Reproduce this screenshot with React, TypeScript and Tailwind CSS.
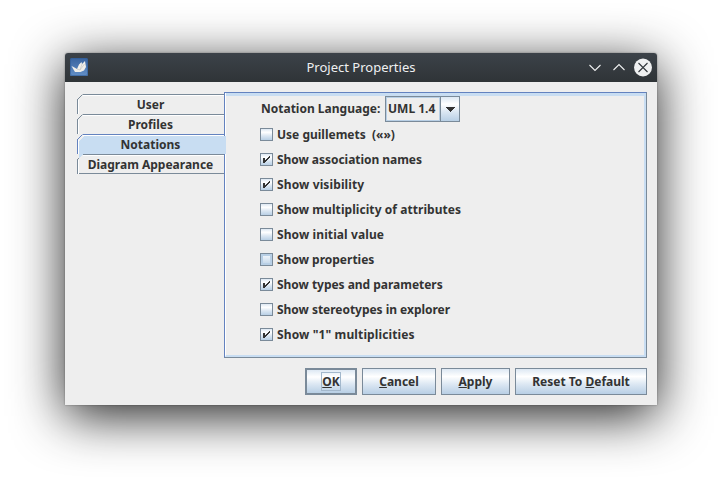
import type { ReactNode } from "react";

const options = [
  { label: "Use guillemets  («»)", checked: false, tracking: "" },
  { label: "Show association names", checked: true, tracking: "tracking-[-0.04px]" },
  { label: "Show visibility", checked: true, tracking: "tracking-[0.12px]" },
  { label: "Show multiplicity of attributes", checked: false, tracking: "tracking-[0.06px]" },
  { label: "Show initial value", checked: false, tracking: "tracking-[0.1px]" },
  { label: "Show properties", checked: false, hover: true, tracking: "" },
  { label: "Show types and parameters", checked: true, tracking: "tracking-[-0.03px]" },
  { label: "Show stereotypes in explorer", checked: false, tracking: "tracking-[-0.03px]" },
  { label: 'Show "1" multiplicities', checked: true, tracking: "tracking-[0.12px]" },
];

const metal = "bg-[linear-gradient(#dde8f3_0%,#ffffff_30%,#dde8f3_60%,#b8cfe5_100%)]";

function Logo() {
  return (
    <svg className="mb-px" width="18" height="18" viewBox="0 0 18 18">
      <defs>
        <linearGradient id="sky" x1="0" y1="0" x2="0" y2="1">
          <stop offset="0" stopColor="#39639f" />
          <stop offset="1" stopColor="#638fc6" />
        </linearGradient>
      </defs>
      <rect width="18" height="18" rx="1.5" fill="url(#sky)" />
      <rect x="0.5" y="0.5" width="17" height="17" rx="1.5" fill="none" stroke="#2f5a94" strokeOpacity="0.6" />
      <path d="M1.5 8 L3.5 9 L7 11 L9 6.5 L11.5 4 L12 6 L15 3 L16 9 L14 12.5 L10.5 14 L5 14 L3.2 11 Z" fill="#f1efea" />
      <path d="M7 11 L10 12 L12 6 M10 12 L14.5 6" fill="none" stroke="#c9c8c4" strokeWidth="0.7" />
    </svg>
  );
}

function Tab({ label, selected = false }: { label: string; selected?: boolean }) {
  const line = selected ? "#6382bf" : "#7a8a99";
  return (
    <div className={`relative h-5 w-[147px] ${selected ? "z-10" : ""}`}>
      <svg className="absolute top-0 left-0 max-w-none overflow-visible" width="149" height="20" shapeRendering="crispEdges">
        {selected && <path d="M2 7 L7 2 H149 V20 H6 L2 24 Z" fill="#c8ddf2" />}
        <path d="M6 1.5 H147" stroke="#ffffff" />
        <path d="M1.5 6 V20" stroke="#ffffff" />
        <path d="M6 0.5 H147" stroke={line} />
        <path d="M0.5 5 V20" stroke={line} />
        <path d="M0.5 5.5 L5.5 0.5" stroke={line} fill="none" shapeRendering="auto" />
      </svg>
      <div className="relative w-[147px] pt-px text-center leading-5">{label}</div>
    </div>
  );
}

function CheckBox({ checked, hover }: { checked: boolean; hover?: boolean }) {
  return (
    <span
      className={`block size-[13px] shrink-0 border border-[#7a8a99] ${hover ? "bg-[#b8cfe5] p-[2px]" : metal}`}
    >
      {hover && <span className="block size-[7px] bg-[linear-gradient(#eef4fa,#c8daeb)]" />}
      {checked && (
        <svg width="11" height="11" viewBox="0 0 11 11" shapeRendering="crispEdges">
          <path d="M2 4h2v5h-2z M4 6h1v2h-1z M5 5h1v2h-1z M6 4h1v2h-1z M7 3h1v2h-1z M8 2h1v2h-1z" fill="#333333" />
        </svg>
      )}
    </span>
  );
}

function Button({ width, children, primary = false }: { width: string; children: ReactNode; primary?: boolean }) {
  return (
    <button
      className={`flex h-[27px] items-center justify-center border-[#7a8a99] ${primary ? "border-2" : "border"} ${metal} ${width}`}
    >
      {children}
    </button>
  );
}

function Key({ children }: { children: string }) {
  return (
    <span className="underline decoration-[#333333] decoration-1 underline-offset-1 [text-decoration-skip-ink:none]">
      {children}
    </span>
  );
}

export default function App() {
  return (
    <div className="h-[482px] w-[722px] overflow-hidden bg-white px-[65px] pt-[53px] font-['Noto_Sans',sans-serif] text-[12px] font-bold text-[#333333]">
      <div className="h-[352px] w-[592px] rounded-t-[3px] bg-[#eeeeee] shadow-[0_11px_51px_rgba(0,0,0,0.87),0_0_2px_rgba(0,0,0,0.4)]">
        <header className="flex h-[29px] items-center rounded-t-[3px] bg-[linear-gradient(#3c4249,#2f3437)] pr-[5px] pl-[5px]">
          <Logo />
          <h1 className="flex-1 pl-[48px] text-center text-[13px] font-normal text-[#eff0f1]">Project Properties</h1>
          <svg width="66" height="20" viewBox="0 0 66 20" fill="none">
            <path d="M3.5 7 L9 12.5 L14.5 7 M27.5 12 L33 6.5 L38.5 12" stroke="#eff0f1" strokeWidth="1.1" />
            <circle cx="57" cy="9.5" r="9" fill="#eff0f1" />
            <path d="M52.5 5 L61.5 14 M61.5 5 L52.5 14" stroke="#31363b" strokeWidth="1.1" />
          </svg>
        </header>
        <div className="flex pt-[10px] pl-3">
          <nav className="w-[147px] pt-[2px]">
            <Tab label="User" />
            <Tab label="Profiles" />
            <Tab label="Notations" selected />
            <Tab label="Diagram Appearance" />
            <div className="-mt-px h-px w-[147px] bg-[#7a8a99]" />
          </nav>
          <section className="h-[266px] w-[423px] border border-t-[#6382bf] border-r-[#7a8a99] border-b-[#7a8a99] border-l-[#6382bf]">
            <div className="relative h-full border-r-2 border-b-2 border-l border-r-[#c8ddf2] border-b-[#c8ddf2] border-l-white pl-[34px]">
              <div className="-ml-[34px] h-[3px] bg-[#c8ddf2]" />
              <div className="flex h-[26px] items-center">
                <label className="w-[125px] pl-[1px] whitespace-nowrap">Notation Language:</label>
                <div className="flex h-[26px] w-[75px] border border-[#7a8a99]">
                  <div className="flex w-[54px] items-center border border-[#b8cfe5] pl-[1px] whitespace-nowrap">UML 1.4</div>
                  <div className={`flex flex-1 items-center justify-center border-l border-[#7a8a99] ${metal}`}>
                    <svg width="10" height="5" viewBox="0 0 10 5" shapeRendering="crispEdges">
                      <path d="M0 0H10L5 5Z" fill="#333333" />
                    </svg>
                  </div>
                </div>
              </div>
              <ul>
                {options.map((o) => (
                  <li key={o.label} className="flex h-[25px] items-center gap-1 whitespace-pre">
                    <CheckBox checked={o.checked} hover={o.hover} />
                    <span className={o.tracking}>{o.label}</span>
                  </li>
                ))}
              </ul>
            </div>
          </section>
        </div>
        <footer className="flex justify-end gap-[5px] pt-[10px] pr-[10px]">
          <Button width="w-[52px]" primary>
            <span className="flex h-[19px] items-center border border-[#a3b8cc]">
              <Key>O</Key>K
            </span>
          </Button>
          <Button width="w-[74px]">
            <Key>C</Key>ancel
          </Button>
          <Button width="w-[69px]">
            <Key>A</Key>pply
          </Button>
          <Button width="w-[132px]">
            <span className="whitespace-pre">
              Reset To <Key>D</Key>efault
            </span>
          </Button>
        </footer>
      </div>
    </div>
  );
}
